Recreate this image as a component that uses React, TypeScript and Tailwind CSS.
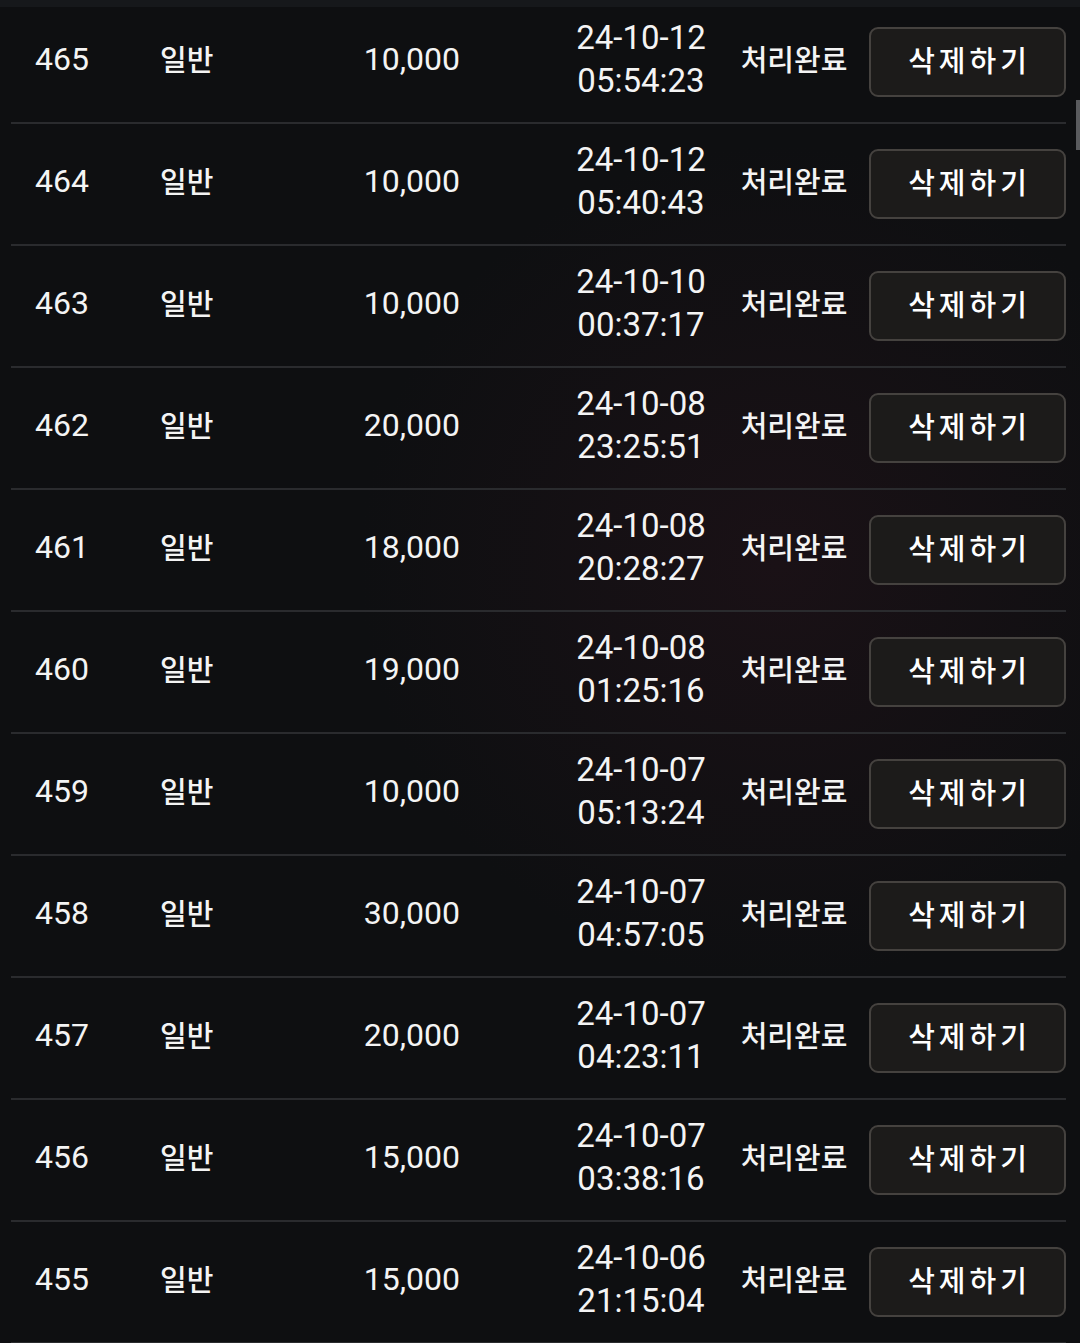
const rows = [
  { no: 465, amount: "10,000", date: "24-10-12", time: "05:54:23" },
  { no: 464, amount: "10,000", date: "24-10-12", time: "05:40:43" },
  { no: 463, amount: "10,000", date: "24-10-10", time: "00:37:17" },
  { no: 462, amount: "20,000", date: "24-10-08", time: "23:25:51" },
  { no: 461, amount: "18,000", date: "24-10-08", time: "20:28:27" },
  { no: 460, amount: "19,000", date: "24-10-08", time: "01:25:16" },
  { no: 459, amount: "10,000", date: "24-10-07", time: "05:13:24" },
  { no: 458, amount: "30,000", date: "24-10-07", time: "04:57:05" },
  { no: 457, amount: "20,000", date: "24-10-07", time: "04:23:11" },
  { no: 456, amount: "15,000", date: "24-10-07", time: "03:38:16" },
  { no: 455, amount: "15,000", date: "24-10-06", time: "21:15:04" },
];

const num = "font-['Roboto','Noto_Sans',sans-serif] text-[32px]";
const kor = "font-['Noto_Sans_CJK_KR','Noto_Sans',sans-serif] text-[29px] font-medium";

export default function App() {
  return (
    <div className="relative h-[1343px] w-[1080px] overflow-hidden bg-[#0e0f11] bg-[radial-gradient(ellipse_at_72%_42%,#1a1116_0%,rgba(14,15,17,0)_38%)] text-[#f4f4f4]">
      <div className="h-[7px] bg-[#16181b]" />
      <div className="ml-[11px] mt-[-5px] w-[1055px]">
        {rows.map((r) => (
          <div
            key={r.no}
            className="flex h-[122px] items-center border-b-2 border-[#2a2b2e] pb-[6px]"
          >
            <div className={`w-[149px] pl-[24px] ${num}`}>{r.no}</div>
            <div className={`w-[150px] ${kor}`}>일반</div>
            <div className={`w-[150px] text-right ${num}`}>{r.amount}</div>
            <div className="ml-[101px] w-[160px] text-center font-['Roboto','Noto_Sans',sans-serif] text-[33px] leading-[43px]">
              <div>{r.date}</div>
              <div>{r.time}</div>
            </div>
            <div className={`w-[146px] whitespace-nowrap text-center ${kor}`}>처리완료</div>
            <button
              type="button"
              className={`ml-[2px] mt-[6px] flex h-[70px] w-[197px] items-center justify-center rounded-[9px] border-2 border-[#45423f] bg-[#1c1b1a] pb-[4px] pl-[4px] tracking-[4px] text-white ${kor}`}
            >
              삭제하기
            </button>
          </div>
        ))}
      </div>
      <div className="absolute right-0 top-[100px] h-[50px] w-[4px] bg-[#5a5b5e]" />
    </div>
  );
}
